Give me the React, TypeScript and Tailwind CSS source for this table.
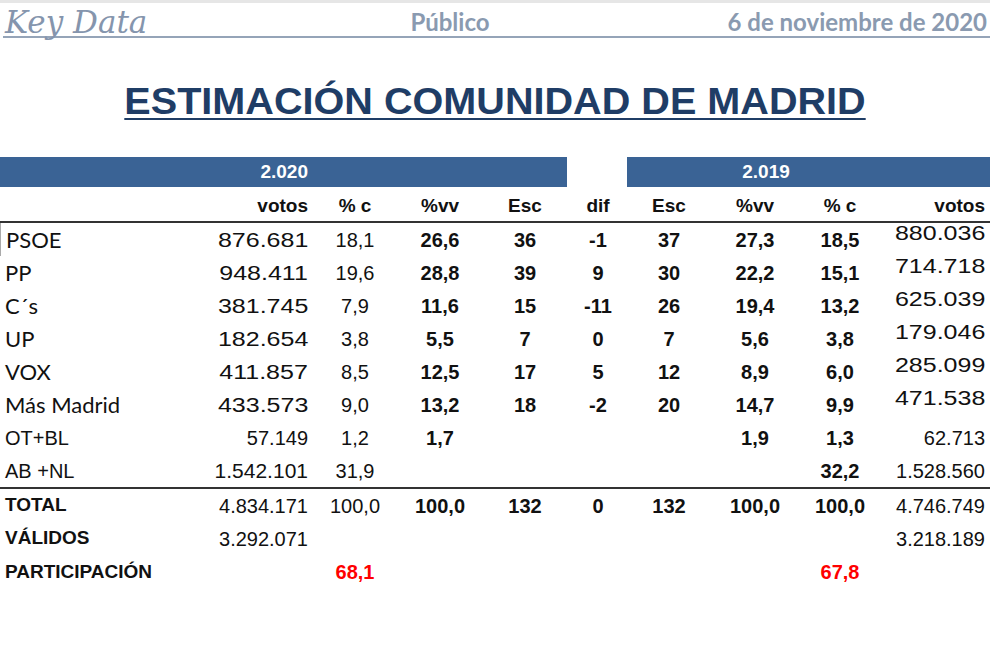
import React from "react";

const COLS = "grid grid-cols-[200px_110px_90px_80px_90px_56px_86px_86px_84px_108px]";
const ARIAL = "font-['Liberation_Sans',Arial,sans-serif]";
const LATO = "font-['Lato','Open_Sans',sans-serif]";

type Row = {
  name: string;
  calibri?: boolean;
  big?: boolean;
  v20: string;
  c20: string;
  vv20: string;
  esc20: string;
  dif: string;
  esc19: string;
  vv19: string;
  c19: string;
  v19: string;
  raise?: boolean;
};

const rows: Row[] = [
  { name: "PSOE", calibri: true, v20: "876.681", c20: "18,1", vv20: "26,6", esc20: "36", dif: "-1", esc19: "37", vv19: "27,3", c19: "18,5", v19: "880.036", raise: true },
  { name: "PP", calibri: true, v20: "948.411", c20: "19,6", vv20: "28,8", esc20: "39", dif: "9", esc19: "30", vv19: "22,2", c19: "15,1", v19: "714.718", raise: true },
  { name: "C´s", calibri: true, v20: "381.745", c20: "7,9", vv20: "11,6", esc20: "15", dif: "-11", esc19: "26", vv19: "19,4", c19: "13,2", v19: "625.039", raise: true },
  { name: "UP", calibri: true, v20: "182.654", c20: "3,8", vv20: "5,5", esc20: "7", dif: "0", esc19: "7", vv19: "5,6", c19: "3,8", v19: "179.046", raise: true },
  { name: "VOX", calibri: true, v20: "411.857", c20: "8,5", vv20: "12,5", esc20: "17", dif: "5", esc19: "12", vv19: "8,9", c19: "6,0", v19: "285.099", raise: true },
  { name: "Más Madrid", calibri: true, v20: "433.573", c20: "9,0", vv20: "13,2", esc20: "18", dif: "-2", esc19: "20", vv19: "14,7", c19: "9,9", v19: "471.538", raise: true },
  { name: "OT+BL", v20: "57.149", c20: "1,2", vv20: "1,7", esc20: "", dif: "", esc19: "", vv19: "1,9", c19: "1,3", v19: "62.713" },
  { name: "AB +NL", big: true, v20: "1.542.101", c20: "31,9", vv20: "", esc20: "", dif: "", esc19: "", vv19: "", c19: "32,2", v19: "1.528.560" },
];

function Wide({ children }: { children: React.ReactNode }) {
  return <span className="inline-block origin-right scale-x-[1.25]">{children}</span>;
}

function DataRow({ r, first }: { r: Row; first?: boolean }) {
  const wide20 = r.v20.length === 7;
  const wide19 = r.v19.length === 7;
  return (
    <div className={`${COLS} h-[33px] items-center text-[20px] leading-[24px] text-[#111] ${ARIAL}`}>
      <div
        className={`pl-[5px] ${r.calibri ? `${LATO} text-[22px]` : ""} ${first ? "border-l border-[#aaa] h-full flex items-center" : ""}`}
      >
        {r.name}
      </div>
      <div className={`text-right pr-[2px] ${r.big ? "text-[21px]" : ""}`}>
        {wide20 ? <Wide>{r.v20}</Wide> : r.v20}
      </div>
      <div className="text-center">{r.c20}</div>
      <div className="text-center font-bold">{r.vv20}</div>
      <div className="text-center font-bold">{r.esc20}</div>
      <div className="text-center font-bold">{r.dif}</div>
      <div className="text-center font-bold">{r.esc19}</div>
      <div className="text-center font-bold">{r.vv19}</div>
      <div className="text-center font-bold">{r.c19}</div>
      <div className={`text-right pr-[5px] ${r.raise ? "self-start pt-[0px] leading-[20px]" : ""}`}>
        {wide19 ? <Wide>{r.v19}</Wide> : r.v19}
      </div>
    </div>
  );
}

export default function App() {
  return (
    <div className="w-[990px] h-[660px] bg-white overflow-hidden relative">
      <div className="h-[3px] bg-[#e6e6e6]" />
      {/* Header */}
      <div className="ml-[3px] grid grid-cols-[327px_240px_1fr] items-end h-[35px] border-b-[2px] border-[#95a4b8]">
        <div className="pl-[2px] font-['DejaVu_Serif',serif] italic text-[31px] leading-[34px] translate-y-[2px] text-[#8595ad]">Key Data</div>
        <div className={`${LATO} font-bold text-[24px] leading-[30px] text-center text-[#8a9ab0]`}>Público</div>
        <div className={`${LATO} font-bold text-[24px] leading-[30px] text-right pr-[3px] text-[#8a9ab0]`}>6 de noviembre de 2020</div>
      </div>

      {/* Title */}
      <div className="mt-[44px] flex justify-center">
        <h1
          className={`${ARIAL} font-bold text-[36px] leading-[40px] text-[#1f3d66] underline decoration-[2px] underline-offset-[4px] scale-x-[1.1]`}
        >
          ESTIMACIÓN COMUNIDAD DE MADRID
        </h1>
      </div>

      {/* Year bars */}
      <div className={`mt-[35px] flex h-[30px] ${ARIAL} font-bold text-[19px] text-white`}>
        <div className="w-[567px] bg-[#3a6395] flex items-center">
          <div className="w-[308px] text-right">2.020</div>
        </div>
        <div className="w-[60px]" />
        <div className="flex-1 bg-[#3a6395] flex items-center">
          <div className="w-[278px] text-center">2.019</div>
        </div>
      </div>

      {/* Column headers */}
      <div className={`${COLS} h-[34px] items-center pt-[5px] ${ARIAL} font-bold text-[19px] text-[#111]`}>
        <div />
        <div className="text-right pr-[2px]">votos</div>
        <div className="text-center">% c</div>
        <div className="text-center">%vv</div>
        <div className="text-center">Esc</div>
        <div className="text-center">dif</div>
        <div className="text-center">Esc</div>
        <div className="text-center">%vv</div>
        <div className="text-center">% c</div>
        <div className="text-right pr-[5px]">votos</div>
      </div>
      <div className="h-[2px] bg-[#333]" />

      {rows.map((r, i) => (
        <DataRow key={r.name} r={r} first={i === 0} />
      ))}

      <div className="h-[2px] bg-[#333]" />

      <div className={`${COLS} h-[33px] items-center ${ARIAL} text-[20px] text-[#111]`}>
        <div className="pl-[5px] font-bold text-[19px]">TOTAL</div>
        <div className="text-right pr-[2px]">4.834.171</div>
        <div className="text-center">100,0</div>
        <div className="text-center font-bold">100,0</div>
        <div className="text-center font-bold">132</div>
        <div className="text-center font-bold">0</div>
        <div className="text-center font-bold">132</div>
        <div className="text-center font-bold">100,0</div>
        <div className="text-center font-bold">100,0</div>
        <div className="text-right pr-[5px]">4.746.749</div>
      </div>
      <div className={`${COLS} h-[33px] items-center ${ARIAL} text-[20px] text-[#111]`}>
        <div className="pl-[5px] font-bold text-[19px]">VÁLIDOS</div>
        <div className="text-right pr-[2px]">3.292.071</div>
        <div />
        <div />
        <div />
        <div />
        <div />
        <div />
        <div />
        <div className="text-right pr-[5px]">3.218.189</div>
      </div>
      <div className={`${COLS} h-[34px] items-center ${ARIAL} text-[20px] text-[#111]`}>
        <div className="pl-[5px] font-bold text-[19px]">PARTICIPACIÓN</div>
        <div />
        <div className="text-center font-bold text-[#f00]">68,1</div>
        <div />
        <div />
        <div />
        <div />
        <div />
        <div className="text-center font-bold text-[#f00]">67,8</div>
        <div />
      </div>
    </div>
  );
}
